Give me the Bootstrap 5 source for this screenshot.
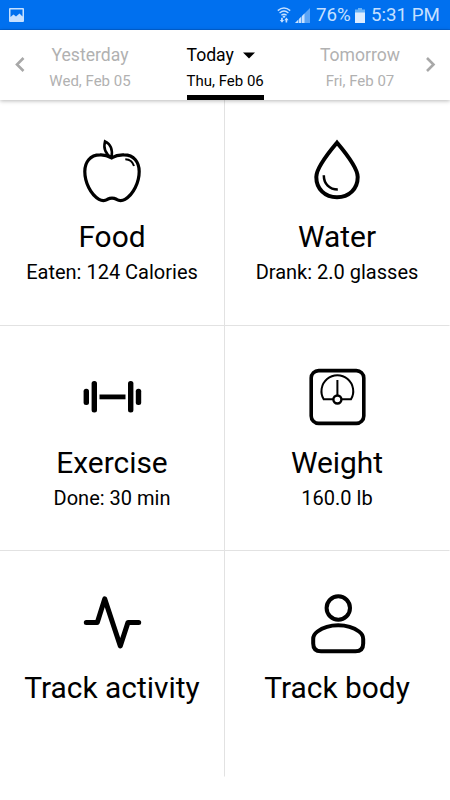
<!DOCTYPE html>
<html lang="en">
<head>
<meta charset="utf-8">
<meta name="viewport" content="width=device-width, initial-scale=1">
<title>Daily tracker</title>
<link href="https://cdn.jsdelivr.net/npm/bootstrap@5.3.0/dist/css/bootstrap.min.css" rel="stylesheet">
<style>
body{font-family:Roboto,"Liberation Sans",sans-serif;color:#000;background:#fff;height:800px;overflow:hidden}
svg{display:block;flex:none}
.status{height:30px;background:#0070ef;color:#c6e0ff;border-bottom:1px solid #0062d6;padding:1px 10px 0 9px}
.status span{font-size:18.700px;line-height:29px;white-space:nowrap}
.pct{width:35px;margin-left:6px}
.clock{margin-left:6px;width:69px}
.signal,.battery{margin-left:4px}
.days{height:70px;box-shadow:0 1px 4px rgba(0,0,0,.28);position:relative;padding:0 10px}
.day{color:#b1b1b1;text-align:center;padding-top:13px;height:70px;white-space:nowrap}
.day div{font-size:17.600px;line-height:25px}
.day small{display:block;font-size:15px;line-height:26px}
.day.current{color:#000;width:77px;border-bottom:5px solid #000;text-align:left}
.side{width:100px}
.previous{margin-left:10px}
.following{margin-right:10px}
.caret{margin-left:9px}
.tile{height:225.5px;padding-top:30px;border-right:1px solid #e2e2e2;border-bottom:1px solid #e2e2e2;text-align:center}
.tile:nth-child(even){border-right-color:transparent}
.tile:nth-child(n+5){border-bottom-color:transparent}
.tile svg{margin:0 auto}
.tile h2{font-size:29.900px;line-height:36px;margin:4px 0 0;font-weight:400;white-space:nowrap}
.tile p{font-size:20px;line-height:24px;margin:5px 0 0;white-space:nowrap}
</style>
<script src="https://cdn.jsdelivr.net/npm/bootstrap@5.3.0/dist/js/bootstrap.bundle.min.js"></script>
</head>
<body>
<header class="status d-flex align-items-center">
  <svg width="15" height="14" viewBox="0 0 15 14" class="me-auto"><path fill="#c6e0ff" fill-rule="evenodd" d="M1 0h13q1 0 1 1v12q0 1-1 1H1q-1 0-1-1V1Q0 0 1 0ZM1.500 1.500V9L4.500 6.500 7 8.500 10.500 5.500 13.500 8.500V1.500Z"/></svg>
  <svg width="14" height="16" viewBox="0 0 14 16" fill="none" stroke="#c6e0ff" stroke-width="1.400"><path d="M.8 3.600Q7-1.600 13.200 3.600M2.600 6Q7 2.200 11.400 6M4.400 8.300Q7 6 9.600 8.300"/><path fill="#c6e0ff" stroke="none" d="M7 8.200 8.600 9.700 7 11 5.400 9.700ZM2.800 13h1.300v-2.200h1.700V13h1.300L5 15.700ZM7.300 13.200 9.400 10.500 11.500 13.200H10.200V15.400H8.600V13.200Z"/></svg>
  <svg width="15" height="15" viewBox="0 0 15 15" class="signal"><path fill="#5ba4f6" d="M15 0V15H0Z"/><path fill="#c6e0ff" d="M0 15 3 12V15ZM4 11 6 9V15H4ZM7 8 9.500 5.500V15H7Z"/></svg>
  <span class="pct">76%</span>
  <svg width="10" height="15" viewBox="0 0 10 15" class="battery"><path fill="#69b2f7" d="M3 0h4v1.500h3V5H0V1.500h3Z"/><path fill="#dcecff" d="M0 4.500h10V15H0Z"/></svg>
  <span class="clock">5:31 PM</span>
</header>

<nav class="days d-flex bg-white">
  <svg width="20" height="70" viewBox="10 30 20 70" fill="none" stroke="#a8a8a8" stroke-width="2.600"><path d="M23.500 58 17 64.500 23.500 71"/></svg>
  <div class="day side previous"><div>Yesterday</div><small>Wed, Feb 05</small></div>
  <div class="day current mx-auto"><div class="d-flex align-items-center"><span>Today</span><svg width="12" height="7" viewBox="0 0 12 7" class="caret"><path d="M0 .500H12L6 6.500Z"/></svg></div><small>Thu, Feb 06</small></div>
  <div class="day side following"><div>Tomorrow</div><small>Fri, Feb 07</small></div>
  <svg width="20" height="70" viewBox="420 30 20 70" fill="none" stroke="#a8a8a8" stroke-width="2.600"><path d="M427 58 433.500 64.500 427 71"/></svg>
</nav>

<main class="row g-0">
  <section class="col-6 tile">
    <svg width="90" height="85" viewBox="67 130 90 85" fill="none" stroke="#000" stroke-width="3.200"><path d="M111.500 157.800C107.500 155.500 104 154.700 100 154.900C90 155 84.800 162 84.800 171.500C84.800 182 90.500 194.500 99 199.300C103 201.500 105.500 200.500 107.500 199.300C110.500 197.800 113.500 197.800 116.500 199.300C118.500 200.500 121 201.500 125 199.300C133.500 194.500 139.200 182 139.200 171.500C139.200 162 134 155 124 154.900C119.500 154.700 115.500 155.500 111.500 157.800Z"/><path stroke-width="2.500" d="M105 141.300C110.500 144 113 149.500 111.500 157.500C105.500 154 103.200 148.500 105 141.300Z"/><path stroke-width="2" d="M125.300 159.300Q132 159.500 134 166"/></svg>
    <h2>Food</h2><p>Eaten: 124 Calories</p>
  </section>
  <section class="col-6 tile">
    <svg width="90" height="85" viewBox="292 130 90 85" fill="none" stroke="#000" stroke-width="4"><path d="M337 142.700C330 151 316.300 167 316.300 177C316.300 189 325 197.300 337 197.300S357.700 189 357.700 177C357.700 167 344 151 337 142.700Z"/><path stroke-width="2.500" d="M323.800 175.300C323.800 184 329.500 189.600 337.800 189.600"/></svg>
    <h2>Water</h2><p>Drank: 2.0 glasses</p>
  </section>
  <section class="col-6 tile">
    <svg width="90" height="85" viewBox="67 356 90 85"><rect x="83.600" y="388.700" width="5.400" height="16.200" rx="2.500"/><rect x="91.600" y="381" width="5.400" height="31.600" rx="2.500"/><rect x="99.500" y="394.500" width="26" height="4.800"/><rect x="128" y="381" width="5.400" height="31.600" rx="2.500"/><rect x="135.800" y="388.700" width="5.400" height="16.200" rx="2.500"/></svg>
    <h2>Exercise</h2><p>Done: 30 min</p>
  </section>
  <section class="col-6 tile">
    <svg width="90" height="85" viewBox="292 356 90 85" fill="none" stroke="#000" stroke-width="3.600"><rect x="311.200" y="370.600" width="52.600" height="52.800" rx="7.500"/><g stroke-width="2"><path d="M333.300 399.300H323.700A15.900 15.900 0 1 1 351 399.300H341.300M337.400 380V395.500"/><circle cx="337.400" cy="399.500" r="4" stroke-width="2.400"/></g></svg>
    <h2>Weight</h2><p>160.0 lb</p>
  </section>
  <section class="col-6 tile">
    <svg width="90" height="85" viewBox="67 581 90 85" fill="none" stroke="#000" stroke-width="5" stroke-linecap="round" stroke-linejoin="round"><path d="M86.300 622.400H97.300L104.700 598.900 120.300 646 128 622.400H138.700"/></svg>
    <h2>Track activity</h2>
  </section>
  <section class="col-6 tile">
    <svg width="90" height="85" viewBox="292 581 90 85" fill="none" stroke="#000" stroke-width="4"><circle cx="338.300" cy="608" r="11.700"/><path d="M313.200 639C313.200 635 315 633.300 317.500 631.500C323 627.500 330 625.300 338.200 625.300S353.500 627.500 359 631.500C361.500 633.300 363.200 635 363.200 639V643.500Q363.200 651.300 355.500 651.300H321Q313.200 651.300 313.200 643.500Z"/></svg>
    <h2>Track body</h2>
  </section>
</main>
</body>
</html>
